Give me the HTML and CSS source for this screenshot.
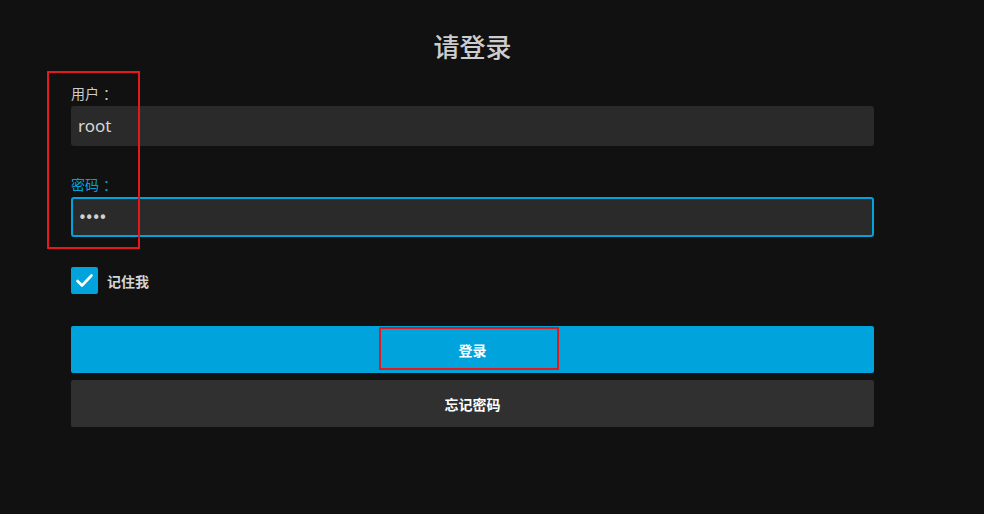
FILE: index.html
```html
<!DOCTYPE html>
<html lang="zh">
<head>
<meta charset="utf-8">
<title>请登录</title>
<link rel="stylesheet" href="styles.css">
</head>
<body>
<div class="page">
  <form class="login">
    <h1 class="title">请登录</h1>
    <div class="field">
      <label class="label">用户<span class="colon">：</span></label>
      <div class="input">root</div>
    </div>
    <div class="field field-pw">
      <label class="label label-active">密码<span class="colon">：</span></label>
      <div class="input input-active"><span class="dots">••••</span></div>
    </div>
    <div class="remember">
      <span class="checkbox">
        <svg viewBox="0 0 27 27" width="27" height="27"><path d="M6.5 14 L11 18.5 L20.5 8.5" fill="none" stroke="#fff" stroke-width="2.6" stroke-linecap="round" stroke-linejoin="round"/></svg>
      </span>
      <span class="remember-text">记住我</span>
    </div>
    <div class="btn btn-primary">登录</div>
    <div class="btn btn-secondary">忘记密码</div>
  </form>
  <div class="mark mark-fields"></div>
  <div class="mark mark-button"></div>
</div>
</body>
</html>
```
FILE: styles.css
```css
html, body {
  margin: 0;
  padding: 0;
  background: #111111;
}
body {
  font-family: "Noto Sans", "Noto Sans CJK SC", sans-serif;
  color: #cccccc;
}
.page {
  position: relative;
  width: 984px;
  height: 514px;
  overflow: hidden;
}
.login {
  width: 803px;
  margin-left: 71px;
  padding-top: 29px;
  display: flex;
  flex-direction: column;
}
.title {
  margin: 0;
  font-family: "Noto Sans CJK SC", sans-serif;
  font-size: 26px;
  line-height: 34px;
  font-weight: 500;
  text-align: center;
  color: #cdcdcd;
}
.field {
  display: flex;
  flex-direction: column;
  margin-top: 20px;
}
.field-pw {
  margin-top: 28px;
}
.label {
  font-family: "Noto Sans CJK SC", sans-serif;
  font-size: 14px;
  line-height: 20px;
  height: 20px;
  margin-bottom: 3px;
  color: #cccccc;
}
.colon {
  padding-left: 4px;
}
.label-active {
  color: #00a3dc;
}
.input {
  box-sizing: border-box;
  height: 40px;
  background: #2a2a2a;
  border-radius: 3px;
  padding: 0 7px;
  font-size: 17px;
  line-height: 40px;
  color: #d6d6d6;
}
.input-active {
  border: 2px solid #00a3dc;
  line-height: 36px;
  padding: 0 5px;
}
.dots {
  font-family: "DejaVu Sans", sans-serif;
  font-size: 15px;
  letter-spacing: -2px;
  color: #d0d0d0;
}
.remember {
  display: flex;
  align-items: center;
  gap: 9px;
  margin-top: 30px;
  height: 27px;
}
.checkbox {
  width: 27px;
  height: 27px;
  background: #00a3dc;
  border-radius: 2px;
  display: flex;
}
.remember-text {
  font-family: "Noto Sans CJK SC", sans-serif;
  font-size: 14px;
  font-weight: 700;
  color: #d4d4d4;
}
.btn {
  height: 47px;
  border-radius: 2px;
  display: flex;
  align-items: center;
  justify-content: center;
  font-family: "Noto Sans CJK SC", sans-serif;
  font-size: 14px;
  font-weight: 700;
  color: #ffffff;
}
.btn-primary {
  margin-top: 32px;
  background: #00a3db;
}
.btn-secondary {
  margin-top: 7px;
  background: #303030;
}
.mark {
  position: absolute;
  box-sizing: border-box;
  border: 2px solid #e3191c;
}
.mark-fields {
  left: 47px;
  top: 71px;
  width: 93px;
  height: 178px;
}
.mark-button {
  left: 379px;
  top: 327px;
  width: 180px;
  height: 43px;
}
```
